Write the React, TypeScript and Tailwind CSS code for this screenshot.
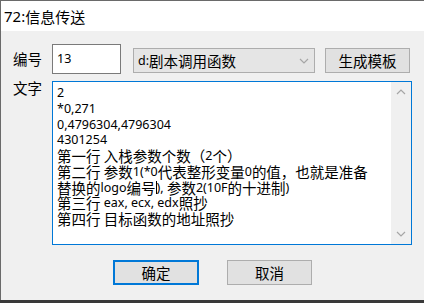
import React from 'react';

const Mixed = ({ text }: { text: string }) => {
  const parts = text.split(/([\x00-\x7f]+)/).filter((p) => p !== '');
  return (
    <>
      {parts.map((p, i) =>
        /^[\x00-\x7f]+$/.test(p) ? (
          <span key={i} className="inline-block align-top h-[15px] leading-[15px] text-[12.5px] font-['Noto_Sans',sans-serif] whitespace-pre">
            {p}
          </span>
        ) : (
          <span key={i} className="inline-block align-top h-[15px] leading-[15px] text-[14.5px]">{p}</span>
        )
      )}
    </>
  );
};

const Chevron = ({ up }: { up?: boolean }) => (
  <svg width="10" height="6" viewBox="0 0 10 6">
    <polyline
      points={up ? '1,5 5,1 9,5' : '1,1 5,5 9,1'}
      fill="none"
      stroke="#a6a6a6"
      strokeWidth="1.2"
    />
  </svg>
);

const lines = [
  '2',
  '*0,271',
  '0,4796304,4796304',
  '4301254',
  '第一行 入栈参数个数（2个）',
  '第二行 参数1(*0代表整形变量0的值，也就是准备',
];

export default function App() {
  return (
    <div className="w-[424px] h-[303px] bg-[#3a3a3a] flex flex-col font-['Noto_Sans_CJK_SC',sans-serif] text-black">
      <div className="h-[300px] flex flex-col border-l border-t border-[#6a6a6a]">
        {/* title bar */}
        <div className="h-[30px] bg-white flex items-center pl-[3px] text-[15px] leading-none">
          <span className="font-['Noto_Sans',sans-serif] text-[15px]">72:</span>
          <span>信息传送</span>
        </div>

        {/* client */}
        <div className="flex-1 bg-[#f0f0f0] flex flex-col">
          {/* row 1 */}
          <div className="flex items-start mt-[13px]">
            <div className="w-[51px] pl-[12px] h-[30px] flex items-center text-[14.5px]">编号</div>
            <div className="w-[69px] h-[30px] bg-white border border-[#7a7a7a] flex items-center pl-[4px]">
              <span className="text-[12.5px] font-['Noto_Sans',sans-serif]">13</span>
            </div>
            <div className="ml-[12px] mt-[4px] w-[182px] h-[25px] bg-[#e5e5e5] border border-[#adadad] flex items-center pl-[4px] pr-[5px] justify-between">
              <span className="flex items-center"><Mixed text="d:剧本调用函数" /></span>
              <Chevron />
            </div>
            <div className="ml-[10px] mt-[4px] w-[85px] h-[25px] bg-[#e1e1e1] border border-[#adadad] flex items-center justify-center text-[14.5px]">
              生成模板
            </div>
          </div>

          {/* row 2 */}
          <div className="flex items-start mt-[7px]">
            <div className="w-[51px] pl-[12px] text-[14.5px] leading-[14px]">文字</div>
            <div className="w-[360px] h-[164px] bg-white border border-[#0078d7] flex">
              <div className="flex-1 pl-[4px] pt-[3px] leading-[15.75px]">
                {lines.map((l, i) => (
                  <div key={i} className="h-[15.75px] whitespace-nowrap">
                    <Mixed text={l} />
                  </div>
                ))}
                <div className="h-[15.75px] whitespace-nowrap">
                  <Mixed text="替换的logo编号" />
                  <span className="inline-block w-[1px] h-[13px] mt-[1px] bg-black align-top" />
                  <Mixed text="), 参数2(10F的十进制)" />
                </div>
                <div className="h-[15.75px] whitespace-nowrap">
                  <Mixed text="第三行 eax, ecx, edx照抄" />
                </div>
                <div className="h-[15.75px] whitespace-nowrap">
                  <Mixed text="第四行 目标函数的地址照抄" />
                </div>
              </div>
              <div className="w-[20px] bg-[#f0f0f0] flex flex-col justify-between items-center py-[7px]">
                <Chevron up />
                <Chevron />
              </div>
            </div>
          </div>

          {/* buttons */}
          <div className="flex mt-[15px] pl-[112px] gap-[28px]">
            <div className="w-[86px] h-[25px] bg-[#e1e1e1] border-2 border-[#0078d7] flex items-center justify-center text-[14.5px]">
              确定
            </div>
            <div className="w-[85px] h-[25px] bg-[#e1e1e1] border border-[#adadad] flex items-center justify-center text-[14.5px]">
              取消
            </div>
          </div>
        </div>
      </div>
    </div>
  );
}
